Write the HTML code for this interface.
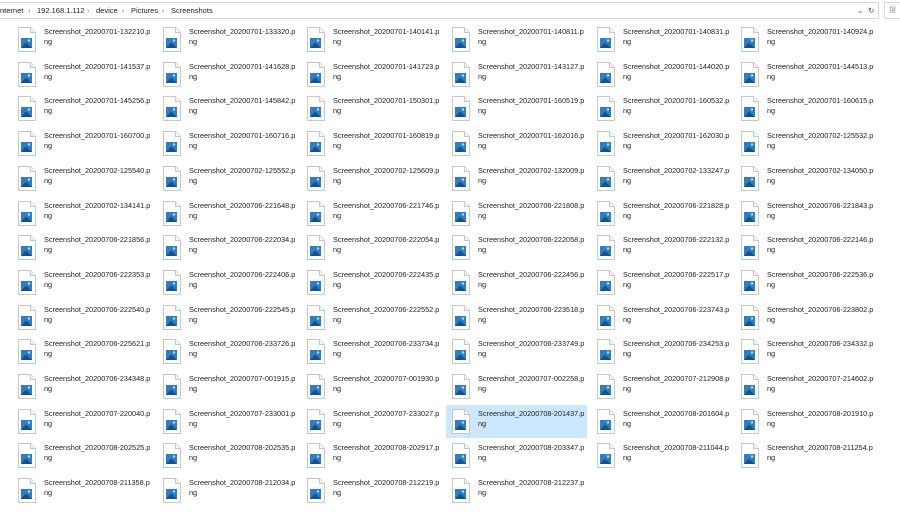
<!DOCTYPE html>
<html><head><meta charset="utf-8"><style>
*{margin:0;padding:0;box-sizing:border-box}
body{width:900px;height:515px;background:#fff;position:relative;overflow:hidden;font-family:"Liberation Sans","Noto Sans CJK SC",sans-serif;color:#1a1a1a}
.addr{position:absolute;left:-1px;top:2px;width:880px;height:17px;border:1px solid #d9d9d9;font-size:7.5px;line-height:15px;color:#222}
.addr span{position:absolute;top:0}
.sr{position:absolute;left:884px;top:2px;width:20px;height:17px;border:1px solid #d9d9d9;font-size:7px;line-height:15px;color:#999;padding-left:4px}
.it{position:absolute;width:141px;height:33px}
.it.sel{background:#cce8ff}
.it svg{position:absolute;left:6px;top:4px}
.it div{position:absolute;left:32px;top:4px;font-size:7.3px;line-height:10px;white-space:nowrap;color:#222}
</style></head><body>
<svg width="0" height="0" style="position:absolute"><defs><symbol id="ic" viewBox="0 0 18 25"><path d="M0.5 0.5H12.5L17.5 5.5V24.5H0.5Z" fill="#fff" stroke="#c8c8c8"/><path d="M12.5 0.5V5.5H17.5" fill="#f3f3f3" stroke="#c8c8c8"/><rect x="3" y="11" width="11" height="10" fill="#2a7fc8"/><path d="M3 21L8 15.5L14 21Z" fill="#15508f"/><circle cx="11" cy="13.5" r="1.2" fill="#b8dcff"/></symbol></defs></svg>
<div class="addr"><span style="left:0">nternet</span><span style="left:28px;color:#777">›</span><span style="left:37px">192.168.1.112</span><span style="left:87px;color:#777">›</span><span style="left:96px">device</span><span style="left:122px;color:#777">›</span><span style="left:131px">Pictures</span><span style="left:162px;color:#777">›</span><span style="left:171px">Screenshots</span><span style="left:857px;color:#555">⌄</span><span style="left:868px;color:#555">↻</span></div>
<div class="sr">搜</div>

<div class="it" style="left:12px;top:23px"><svg width="18" height="25"><use href="#ic"/></svg><div>Screenshot_20200701-132210.p<br>ng</div></div>
<div class="it" style="left:157px;top:23px"><svg width="18" height="25"><use href="#ic"/></svg><div>Screenshot_20200701-133320.p<br>ng</div></div>
<div class="it" style="left:301px;top:23px"><svg width="18" height="25"><use href="#ic"/></svg><div>Screenshot_20200701-140141.p<br>ng</div></div>
<div class="it" style="left:446px;top:23px"><svg width="18" height="25"><use href="#ic"/></svg><div>Screenshot_20200701-140811.p<br>ng</div></div>
<div class="it" style="left:591px;top:23px"><svg width="18" height="25"><use href="#ic"/></svg><div>Screenshot_20200701-140831.p<br>ng</div></div>
<div class="it" style="left:735px;top:23px"><svg width="18" height="25"><use href="#ic"/></svg><div>Screenshot_20200701-140924.p<br>ng</div></div>

<div class="it" style="left:12px;top:58px"><svg width="18" height="25"><use href="#ic"/></svg><div>Screenshot_20200701-141537.p<br>ng</div></div>
<div class="it" style="left:157px;top:58px"><svg width="18" height="25"><use href="#ic"/></svg><div>Screenshot_20200701-141628.p<br>ng</div></div>
<div class="it" style="left:301px;top:58px"><svg width="18" height="25"><use href="#ic"/></svg><div>Screenshot_20200701-141723.p<br>ng</div></div>
<div class="it" style="left:446px;top:58px"><svg width="18" height="25"><use href="#ic"/></svg><div>Screenshot_20200701-143127.p<br>ng</div></div>
<div class="it" style="left:591px;top:58px"><svg width="18" height="25"><use href="#ic"/></svg><div>Screenshot_20200701-144020.p<br>ng</div></div>
<div class="it" style="left:735px;top:58px"><svg width="18" height="25"><use href="#ic"/></svg><div>Screenshot_20200701-144513.p<br>ng</div></div>

<div class="it" style="left:12px;top:92px"><svg width="18" height="25"><use href="#ic"/></svg><div>Screenshot_20200701-145256.p<br>ng</div></div>
<div class="it" style="left:157px;top:92px"><svg width="18" height="25"><use href="#ic"/></svg><div>Screenshot_20200701-145842.p<br>ng</div></div>
<div class="it" style="left:301px;top:92px"><svg width="18" height="25"><use href="#ic"/></svg><div>Screenshot_20200701-150301.p<br>ng</div></div>
<div class="it" style="left:446px;top:92px"><svg width="18" height="25"><use href="#ic"/></svg><div>Screenshot_20200701-160519.p<br>ng</div></div>
<div class="it" style="left:591px;top:92px"><svg width="18" height="25"><use href="#ic"/></svg><div>Screenshot_20200701-160532.p<br>ng</div></div>
<div class="it" style="left:735px;top:92px"><svg width="18" height="25"><use href="#ic"/></svg><div>Screenshot_20200701-160615.p<br>ng</div></div>

<div class="it" style="left:12px;top:127px"><svg width="18" height="25"><use href="#ic"/></svg><div>Screenshot_20200701-160700.p<br>ng</div></div>
<div class="it" style="left:157px;top:127px"><svg width="18" height="25"><use href="#ic"/></svg><div>Screenshot_20200701-160716.p<br>ng</div></div>
<div class="it" style="left:301px;top:127px"><svg width="18" height="25"><use href="#ic"/></svg><div>Screenshot_20200701-160819.p<br>ng</div></div>
<div class="it" style="left:446px;top:127px"><svg width="18" height="25"><use href="#ic"/></svg><div>Screenshot_20200701-162016.p<br>ng</div></div>
<div class="it" style="left:591px;top:127px"><svg width="18" height="25"><use href="#ic"/></svg><div>Screenshot_20200701-162030.p<br>ng</div></div>
<div class="it" style="left:735px;top:127px"><svg width="18" height="25"><use href="#ic"/></svg><div>Screenshot_20200702-125532.p<br>ng</div></div>

<div class="it" style="left:12px;top:162px"><svg width="18" height="25"><use href="#ic"/></svg><div>Screenshot_20200702-125540.p<br>ng</div></div>
<div class="it" style="left:157px;top:162px"><svg width="18" height="25"><use href="#ic"/></svg><div>Screenshot_20200702-125552.p<br>ng</div></div>
<div class="it" style="left:301px;top:162px"><svg width="18" height="25"><use href="#ic"/></svg><div>Screenshot_20200702-125609.p<br>ng</div></div>
<div class="it" style="left:446px;top:162px"><svg width="18" height="25"><use href="#ic"/></svg><div>Screenshot_20200702-132009.p<br>ng</div></div>
<div class="it" style="left:591px;top:162px"><svg width="18" height="25"><use href="#ic"/></svg><div>Screenshot_20200702-133247.p<br>ng</div></div>
<div class="it" style="left:735px;top:162px"><svg width="18" height="25"><use href="#ic"/></svg><div>Screenshot_20200702-134050.p<br>ng</div></div>

<div class="it" style="left:12px;top:197px"><svg width="18" height="25"><use href="#ic"/></svg><div>Screenshot_20200702-134141.p<br>ng</div></div>
<div class="it" style="left:157px;top:197px"><svg width="18" height="25"><use href="#ic"/></svg><div>Screenshot_20200706-221648.p<br>ng</div></div>
<div class="it" style="left:301px;top:197px"><svg width="18" height="25"><use href="#ic"/></svg><div>Screenshot_20200706-221746.p<br>ng</div></div>
<div class="it" style="left:446px;top:197px"><svg width="18" height="25"><use href="#ic"/></svg><div>Screenshot_20200706-221808.p<br>ng</div></div>
<div class="it" style="left:591px;top:197px"><svg width="18" height="25"><use href="#ic"/></svg><div>Screenshot_20200706-221828.p<br>ng</div></div>
<div class="it" style="left:735px;top:197px"><svg width="18" height="25"><use href="#ic"/></svg><div>Screenshot_20200706-221843.p<br>ng</div></div>

<div class="it" style="left:12px;top:231px"><svg width="18" height="25"><use href="#ic"/></svg><div>Screenshot_20200706-221856.p<br>ng</div></div>
<div class="it" style="left:157px;top:231px"><svg width="18" height="25"><use href="#ic"/></svg><div>Screenshot_20200706-222034.p<br>ng</div></div>
<div class="it" style="left:301px;top:231px"><svg width="18" height="25"><use href="#ic"/></svg><div>Screenshot_20200706-222054.p<br>ng</div></div>
<div class="it" style="left:446px;top:231px"><svg width="18" height="25"><use href="#ic"/></svg><div>Screenshot_20200706-222058.p<br>ng</div></div>
<div class="it" style="left:591px;top:231px"><svg width="18" height="25"><use href="#ic"/></svg><div>Screenshot_20200706-222132.p<br>ng</div></div>
<div class="it" style="left:735px;top:231px"><svg width="18" height="25"><use href="#ic"/></svg><div>Screenshot_20200706-222146.p<br>ng</div></div>

<div class="it" style="left:12px;top:266px"><svg width="18" height="25"><use href="#ic"/></svg><div>Screenshot_20200706-222353.p<br>ng</div></div>
<div class="it" style="left:157px;top:266px"><svg width="18" height="25"><use href="#ic"/></svg><div>Screenshot_20200706-222406.p<br>ng</div></div>
<div class="it" style="left:301px;top:266px"><svg width="18" height="25"><use href="#ic"/></svg><div>Screenshot_20200706-222435.p<br>ng</div></div>
<div class="it" style="left:446px;top:266px"><svg width="18" height="25"><use href="#ic"/></svg><div>Screenshot_20200706-222456.p<br>ng</div></div>
<div class="it" style="left:591px;top:266px"><svg width="18" height="25"><use href="#ic"/></svg><div>Screenshot_20200706-222517.p<br>ng</div></div>
<div class="it" style="left:735px;top:266px"><svg width="18" height="25"><use href="#ic"/></svg><div>Screenshot_20200706-222536.p<br>ng</div></div>

<div class="it" style="left:12px;top:301px"><svg width="18" height="25"><use href="#ic"/></svg><div>Screenshot_20200706-222540.p<br>ng</div></div>
<div class="it" style="left:157px;top:301px"><svg width="18" height="25"><use href="#ic"/></svg><div>Screenshot_20200706-222545.p<br>ng</div></div>
<div class="it" style="left:301px;top:301px"><svg width="18" height="25"><use href="#ic"/></svg><div>Screenshot_20200706-222552.p<br>ng</div></div>
<div class="it" style="left:446px;top:301px"><svg width="18" height="25"><use href="#ic"/></svg><div>Screenshot_20200706-223518.p<br>ng</div></div>
<div class="it" style="left:591px;top:301px"><svg width="18" height="25"><use href="#ic"/></svg><div>Screenshot_20200706-223743.p<br>ng</div></div>
<div class="it" style="left:735px;top:301px"><svg width="18" height="25"><use href="#ic"/></svg><div>Screenshot_20200706-223802.p<br>ng</div></div>

<div class="it" style="left:12px;top:335px"><svg width="18" height="25"><use href="#ic"/></svg><div>Screenshot_20200706-225621.p<br>ng</div></div>
<div class="it" style="left:157px;top:335px"><svg width="18" height="25"><use href="#ic"/></svg><div>Screenshot_20200706-233726.p<br>ng</div></div>
<div class="it" style="left:301px;top:335px"><svg width="18" height="25"><use href="#ic"/></svg><div>Screenshot_20200706-233734.p<br>ng</div></div>
<div class="it" style="left:446px;top:335px"><svg width="18" height="25"><use href="#ic"/></svg><div>Screenshot_20200706-233749.p<br>ng</div></div>
<div class="it" style="left:591px;top:335px"><svg width="18" height="25"><use href="#ic"/></svg><div>Screenshot_20200706-234253.p<br>ng</div></div>
<div class="it" style="left:735px;top:335px"><svg width="18" height="25"><use href="#ic"/></svg><div>Screenshot_20200706-234332.p<br>ng</div></div>

<div class="it" style="left:12px;top:370px"><svg width="18" height="25"><use href="#ic"/></svg><div>Screenshot_20200706-234348.p<br>ng</div></div>
<div class="it" style="left:157px;top:370px"><svg width="18" height="25"><use href="#ic"/></svg><div>Screenshot_20200707-001915.p<br>ng</div></div>
<div class="it" style="left:301px;top:370px"><svg width="18" height="25"><use href="#ic"/></svg><div>Screenshot_20200707-001930.p<br>ng</div></div>
<div class="it" style="left:446px;top:370px"><svg width="18" height="25"><use href="#ic"/></svg><div>Screenshot_20200707-002258.p<br>ng</div></div>
<div class="it" style="left:591px;top:370px"><svg width="18" height="25"><use href="#ic"/></svg><div>Screenshot_20200707-212908.p<br>ng</div></div>
<div class="it" style="left:735px;top:370px"><svg width="18" height="25"><use href="#ic"/></svg><div>Screenshot_20200707-214602.p<br>ng</div></div>

<div class="it" style="left:12px;top:405px"><svg width="18" height="25"><use href="#ic"/></svg><div>Screenshot_20200707-220040.p<br>ng</div></div>
<div class="it" style="left:157px;top:405px"><svg width="18" height="25"><use href="#ic"/></svg><div>Screenshot_20200707-233001.p<br>ng</div></div>
<div class="it" style="left:301px;top:405px"><svg width="18" height="25"><use href="#ic"/></svg><div>Screenshot_20200707-233027.p<br>ng</div></div>
<div class="it sel" style="left:446px;top:405px"><svg width="18" height="25"><use href="#ic"/></svg><div>Screenshot_20200708-201437.p<br>ng</div></div>
<div class="it" style="left:591px;top:405px"><svg width="18" height="25"><use href="#ic"/></svg><div>Screenshot_20200708-201604.p<br>ng</div></div>
<div class="it" style="left:735px;top:405px"><svg width="18" height="25"><use href="#ic"/></svg><div>Screenshot_20200708-201910.p<br>ng</div></div>

<div class="it" style="left:12px;top:439px"><svg width="18" height="25"><use href="#ic"/></svg><div>Screenshot_20200708-202525.p<br>ng</div></div>
<div class="it" style="left:157px;top:439px"><svg width="18" height="25"><use href="#ic"/></svg><div>Screenshot_20200708-202535.p<br>ng</div></div>
<div class="it" style="left:301px;top:439px"><svg width="18" height="25"><use href="#ic"/></svg><div>Screenshot_20200708-202917.p<br>ng</div></div>
<div class="it" style="left:446px;top:439px"><svg width="18" height="25"><use href="#ic"/></svg><div>Screenshot_20200708-203347.p<br>ng</div></div>
<div class="it" style="left:591px;top:439px"><svg width="18" height="25"><use href="#ic"/></svg><div>Screenshot_20200708-211044.p<br>ng</div></div>
<div class="it" style="left:735px;top:439px"><svg width="18" height="25"><use href="#ic"/></svg><div>Screenshot_20200708-211254.p<br>ng</div></div>

<div class="it" style="left:12px;top:474px"><svg width="18" height="25"><use href="#ic"/></svg><div>Screenshot_20200708-211358.p<br>ng</div></div>
<div class="it" style="left:157px;top:474px"><svg width="18" height="25"><use href="#ic"/></svg><div>Screenshot_20200708-212034.p<br>ng</div></div>
<div class="it" style="left:301px;top:474px"><svg width="18" height="25"><use href="#ic"/></svg><div>Screenshot_20200708-212219.p<br>ng</div></div>
<div class="it" style="left:446px;top:474px"><svg width="18" height="25"><use href="#ic"/></svg><div>Screenshot_20200708-212237.p<br>ng</div></div>
</body></html>
